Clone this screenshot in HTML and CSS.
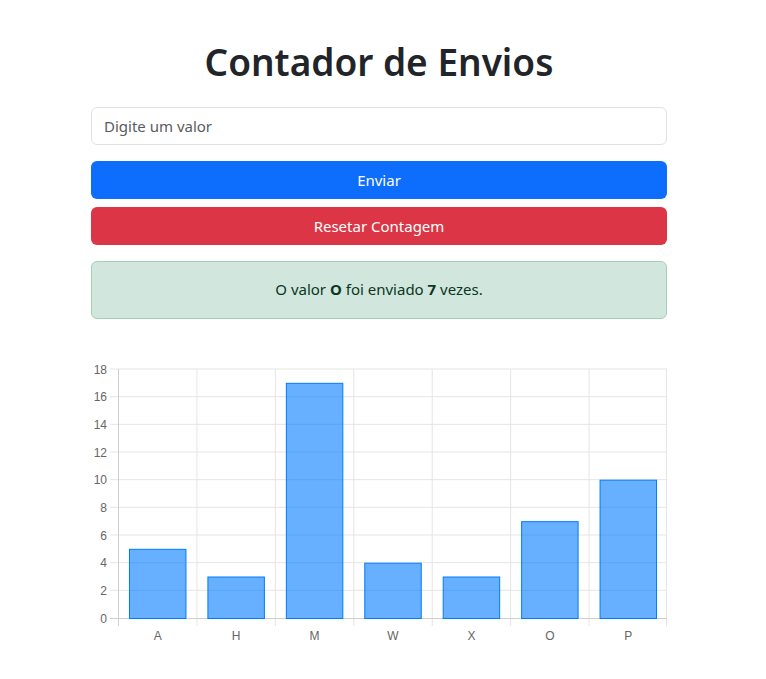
FILE: index.html
```html
<!DOCTYPE html>
<html lang="pt">
<head>
<meta charset="utf-8">
<title>Contador de Envios</title>
<link rel="stylesheet" href="styles.css">
</head>
<body>
<main class="container">
  <h1 class="title">Contador de Envios</h1>
  <input class="field" type="text" placeholder="Digite um valor">
  <button class="btn btn-primary">Enviar</button>
  <button class="btn btn-danger">Resetar Contagem</button>
  <div class="alert">O valor <strong>O</strong> foi enviado <strong>7</strong> vezes.</div>
  <div class="chart">
    <svg width="576" height="305" viewBox="0 0 576 305" xmlns="http://www.w3.org/2000/svg">
      <g class="grid">
        <line x1="19" y1="250.33" x2="576" y2="250.33"/>
        <line x1="19" y1="222.67" x2="576" y2="222.67"/>
        <line x1="19" y1="195" x2="576" y2="195"/>
        <line x1="19" y1="167.33" x2="576" y2="167.33"/>
        <line x1="19" y1="139.67" x2="576" y2="139.67"/>
        <line x1="19" y1="112" x2="576" y2="112"/>
        <line x1="19" y1="84.33" x2="576" y2="84.33"/>
        <line x1="19" y1="56.67" x2="576" y2="56.67"/>
        <line x1="19" y1="29" x2="576" y2="29"/>
        <line x1="105.93" y1="29" x2="105.93" y2="286"/>
        <line x1="184.36" y1="29" x2="184.36" y2="286"/>
        <line x1="262.79" y1="29" x2="262.79" y2="286"/>
        <line x1="341.21" y1="29" x2="341.21" y2="286"/>
        <line x1="419.64" y1="29" x2="419.64" y2="286"/>
        <line x1="498.07" y1="29" x2="498.07" y2="286"/>
        <line x1="575.5" y1="29" x2="575.5" y2="286"/>
      </g>
      <g class="axis">
        <line x1="27.5" y1="29" x2="27.5" y2="286"/>
        <line x1="19" y1="278.5" x2="576" y2="278.5"/>
      </g>
      <g class="bars">
        <rect x="38.48" y="209.33" width="56.47" height="69.17"/>
        <rect x="116.91" y="237" width="56.47" height="41.5"/>
        <rect x="195.34" y="43.33" width="56.47" height="235.17"/>
        <rect x="273.77" y="223.17" width="56.47" height="55.33"/>
        <rect x="352.2" y="237" width="56.47" height="41.5"/>
        <rect x="430.63" y="181.67" width="56.47" height="96.83"/>
        <rect x="509.06" y="140.17" width="56.47" height="138.33"/>
      </g>
      <g class="ylab">
        <text x="16" y="282.5">0</text>
        <text x="16" y="254.8">2</text>
        <text x="16" y="227.2">4</text>
        <text x="16" y="199.5">6</text>
        <text x="16" y="171.8">8</text>
        <text x="16" y="144.2">10</text>
        <text x="16" y="116.5">12</text>
        <text x="16" y="88.8">14</text>
        <text x="16" y="61.2">16</text>
        <text x="16" y="33.5">18</text>
      </g>
      <g class="xlab">
        <text x="66.71" y="299.5">A</text>
        <text x="145.14" y="299.5">H</text>
        <text x="223.57" y="299.5">M</text>
        <text x="302" y="299.5">W</text>
        <text x="380.43" y="299.5">X</text>
        <text x="458.86" y="299.5">O</text>
        <text x="537.29" y="299.5">P</text>
      </g>
    </svg>
  </div>
</main>
</body>
</html>
```

FILE: styles.css
```css
* { box-sizing: border-box; }
html, body { margin: 0; padding: 0; background: #fff; }
body {
  font-family: "Noto Sans", "Open Sans", sans-serif;
  color: #212529;
  font-size: 16px;
  line-height: 1.5;
}
.container {
  width: 576px;
  margin-left: 91px;
  display: flex;
  flex-direction: column;
}
.title {
  margin: 38px 0 21px;
  font-size: 37px;
  line-height: 48px;
  font-weight: 600;
  text-align: center;
  color: #212529;
}
.field {
  height: 38px;
  padding: 6px 12px;
  border: 1px solid #dee2e6;
  border-radius: 6px;
  font: inherit;
  font-size: 15px;
  color: #212529;
  margin-bottom: 16px;
  outline: none;
}
.field::placeholder { color: #595c5f; }
.btn {
  height: 38px;
  border: 1px solid transparent;
  border-radius: 6px;
  color: #fff;
  font: inherit;
  font-size: 15px;
  padding: 0 12px;
}
.btn-primary { background: #0d6efd; margin-bottom: 8px; }
.btn-danger { background: #dc3545; margin-bottom: 16px; }
.alert {
  height: 58px;
  padding: 16px;
  background: #d1e7dd;
  border: 1px solid #a3cfbb;
  border-radius: 6px;
  color: #0a3622;
  text-align: center;
  font-size: 15px;
}
.alert strong { font-weight: 700; }
.chart { margin-top: 21px; height: 305px; }
.chart svg { display: block; }
.grid line { stroke: #e5e5e5; stroke-width: 1; }
.axis line { stroke: #cfcfcf; stroke-width: 1; }
.bars rect { fill: rgba(0, 123, 255, 0.6); stroke: #007bff; stroke-width: 1; }
.ylab text, .xlab text {
  font-family: "Liberation Sans", Arial, sans-serif;
  font-size: 12px;
  fill: #666;
}
.ylab text { text-anchor: end; }
.xlab text { text-anchor: middle; }
```
